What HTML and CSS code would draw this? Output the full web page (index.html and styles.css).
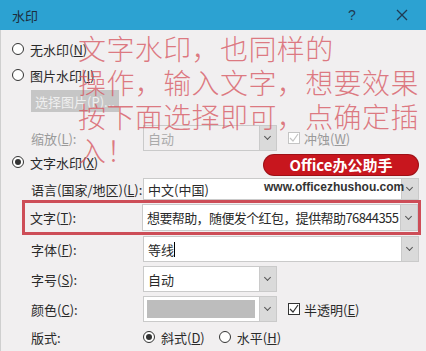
FILE: index.html
```html
<!DOCTYPE html>
<html>

<head>
    <meta charset="utf-8" />
    <title>水印</title>
    <link rel="stylesheet" href="styles.css">
</head>

<body>
    <div class="dialog">
        <div class="title-bar">
            <span class="title">水印</span>
            <span class="help">?</span>
            <svg class="close" width="12" height="12" viewBox="0 0 12 12">
                <path d="M1 1 L11 11 M11 1 L1 11" stroke="#1f3a52" stroke-width="1.3" fill="none" />
            </svg>
        </div>
        <div class="dialog-body">
            <div class="radio-row"><span class="radio"></span>无水印(<u>N</u>)</div>
            <div class="radio-row"><span class="radio"></span>图片水印(<u>I</u>)</div>
            <div class="button-row"><span class="push-button">选择图片(<u>P</u>)...</span></div>
            <div class="form-row scale-row">
                <label class="field-label disabled-label">缩放(<u>L</u>):</label>
                <div class="combo narrow disabled"><span class="combo-text">自动</span><span class="combo-arrow"></span></div>
                <span class="checkbox disabled-box">
                    <svg width="10" height="10" viewBox="0 0 10 10"><path d="M1 5 L4 8 L9 1" stroke="#c4c4c4" stroke-width="1.2" fill="none" /></svg>
                </span>
                <span class="disabled-label">冲蚀(<u>W</u>)</span>
            </div>
            <div class="radio-row text-mark-row"><span class="radio checked"></span>文字水印(<u>X</u>)</div>
            <div class="form-row lang-row">
                <label class="field-label">语言(国家/地区)(<u>L</u>):</label>
                <div class="combo wide"><span class="combo-text">中文(中国)</span><span class="combo-arrow"></span></div>
            </div>
            <div class="form-row highlight-row">
                <label class="field-label">文字(<u>T</u>):</label>
                <div class="combo wide"><span class="combo-text tight-text">想要帮助，随便发个红包，提供帮助76844355</span><span class="combo-arrow"></span></div>
            </div>
            <div class="form-row font-row">
                <label class="field-label">字体(<u>F</u>):</label>
                <div class="combo wide"><span class="combo-text">等线<span class="caret"></span></span><span class="combo-arrow"></span></div>
            </div>
            <div class="form-row size-row">
                <label class="field-label">字号(<u>S</u>):</label>
                <div class="combo narrow"><span class="combo-text">自动</span><span class="combo-arrow"></span></div>
            </div>
            <div class="form-row color-row">
                <label class="field-label">颜色(<u>C</u>):</label>
                <div class="combo narrow"><span class="color-swatch"></span><span class="combo-arrow"></span></div>
                <span class="checkbox">
                    <svg width="10" height="10" viewBox="0 0 10 10"><path d="M1 5 L4 8 L9 1" stroke="#333" stroke-width="1.2" fill="none" /></svg>
                </span>
                <span>半透明(<u>E</u>)</span>
            </div>
            <div class="form-row layout-row">
                <label class="field-label">版式:</label>
                <span class="radio checked"></span><span class="option-text">斜式(<u>D</u>)</span>
                <span class="radio"></span><span>水平(<u>H</u>)</span>
            </div>
        </div>

        <div class="note-text">文字水印，也同样的<br>操作，输入文字，想要效果<br>按下面选择即可，点确定插<br>入！</div>

        <div class="site-logo">
            <div class="logo-pill">Office办公助手</div>
            <div class="logo-url">www.officezhushou.com</div>
        </div>
    </div>
</body>

</html>
```

FILE: styles.css
```css
body {
    margin: 0;
    font-family: "Noto Sans CJK SC", "Liberation Sans", sans-serif;
    font-size: 13px;
    color: #2a2a2a;
}

.dialog {
    position: relative;
    width: 426px;
    height: 351px;
    overflow: hidden;
    background: #f1eff0;
}

.title-bar {
    display: flex;
    align-items: center;
    height: 30px;
    padding-left: 12px;
    background: #2ca2d2;
}

.title {
    flex: 1;
    color: #1d2d3a;
    font-size: 13px;
}

.help {
    width: 20px;
    margin-right: 28px;
    color: #1f3a52;
    font-family: "Liberation Sans", sans-serif;
    font-size: 14px;
}

.close {
    margin-right: 18px;
}

.dialog-body {
    padding: 6px 0 0 11px;
    border-left: 1px solid #cfcfcf;
    height: 315px;
}

u {
    text-decoration: underline;
    text-underline-offset: 1px;
}

.radio-row {
    display: flex;
    align-items: center;
    height: 26px;
}

.radio {
    display: inline-block;
    box-sizing: border-box;
    width: 12px;
    height: 12px;
    margin-right: 6px;
    border: 1px solid #333;
    border-radius: 50%;
    background: #fff;
    position: relative;
}

.radio.checked::after {
    content: "";
    position: absolute;
    left: 2px;
    top: 2px;
    width: 6px;
    height: 6px;
    border-radius: 50%;
    background: #333;
}

.button-row {
    margin-top: 2px;
    height: 22px;
    padding-left: 19px;
}

.push-button {
    display: inline-flex;
    align-items: center;
    justify-content: center;
    width: 88px;
    height: 22px;
    background: #c6c6c6;
    color: #efefef;
}

.form-row {
    display: flex;
    align-items: center;
    padding-left: 19px;
}

.field-label {
    width: 112px;
    flex: none;
}

.disabled-label {
    color: #9a9a9a;
}

.scale-row {
    margin-top: 12px;
    height: 28px;
}

.text-mark-row {
    height: 20px;
}

.lang-row {
    margin-top: 6px;
    height: 22px;
}

.highlight-row {
    margin-left: 10px;
    padding-left: 5px;
    width: 388px;
    height: 29px;
    border: 3px solid #cd4d57;
}

.font-row {
    margin-top: 1px;
    height: 26px;
}

.size-row,
.color-row {
    margin-top: 4px;
    height: 26px;
}

.layout-row {
    margin-top: 4px;
    height: 22px;
}

.combo {
    display: flex;
    flex: none;
    box-sizing: border-box;
    height: 100%;
    border: 1px solid #cacaca;
    background: #fff;
}

.lang-row .combo {
    height: 22px;
}

.highlight-row .combo {
    height: 27px;
}

.wide {
    width: 276px;
}

.narrow {
    width: 134px;
}

.combo.disabled {
    background: #f1eff0;
    height: 26px;
}

.combo-text {
    flex: 1;
    display: flex;
    align-items: center;
    padding-left: 4px;
    white-space: nowrap;
    overflow: hidden;
}

.tight-text {
    letter-spacing: -0.6px;
}

.disabled .combo-text {
    color: #aaa;
}

.caret {
    display: inline-block;
    width: 1px;
    height: 15px;
    background: #000;
}

.combo-arrow {
    position: relative;
    width: 16px;
    flex: none;
    background: #dadada;
    border-left: 1px solid #cacaca;
}

.combo-arrow::after {
    content: "";
    position: absolute;
    left: 5px;
    top: 50%;
    width: 4px;
    height: 4px;
    margin-top: -4px;
    border-right: 1px solid #555;
    border-bottom: 1px solid #555;
    transform: rotate(45deg);
}

.color-swatch {
    flex: 1;
    margin: 3px 4px 3px 3px;
    background: #bdbdbd;
}

.checkbox {
    display: inline-flex;
    align-items: center;
    justify-content: center;
    box-sizing: border-box;
    width: 12px;
    height: 12px;
    margin: 0 4px 0 11px;
    border: 1px solid #333;
    background: #fff;
}

.checkbox.disabled-box {
    border-color: #c4c4c4;
}

.option-text {
    margin-right: 14px;
}

.note-text {
    position: absolute;
    left: 78px;
    top: 31px;
    font-size: 28px;
    font-weight: 300;
    line-height: 34px;
    letter-spacing: 0.4px;
    color: rgba(214, 82, 92, 0.75);
}

.site-logo {
    position: absolute;
    left: 264px;
    top: 155px;
    width: 154px;
}

.logo-pill {
    height: 20px;
    line-height: 20px;
    border-radius: 10px;
    background: #c8161e;
    box-shadow: 0 0 0 1px #9e1016;
    color: #fff;
    font-weight: bold;
    font-size: 15px;
    text-align: center;
}

.logo-url {
    margin-top: 5px;
    font-family: "Liberation Sans", sans-serif;
    font-weight: bold;
    font-size: 12px;
    color: #333;
}
```
